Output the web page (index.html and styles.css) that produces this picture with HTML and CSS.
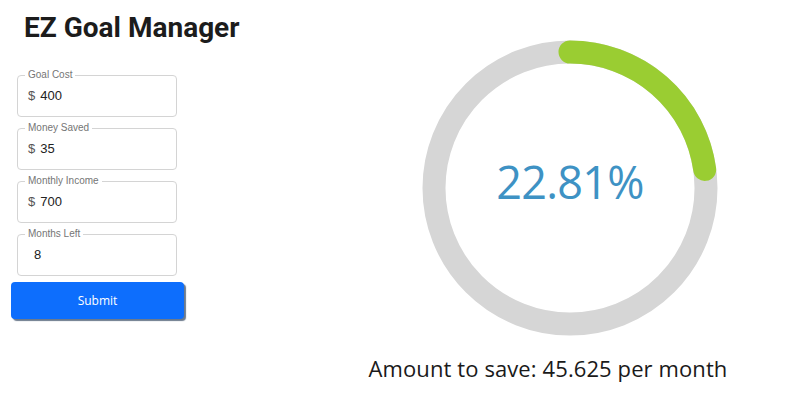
FILE: index.html
```html
<!DOCTYPE html>
<html>
<head>
<meta charset="utf-8">
<title>EZ Goal Manager</title>
<link rel="stylesheet" href="styles.css">
</head>
<body>
<div class="page">
  <div class="left">
    <h1 class="title">EZ Goal Manager</h1>
    <form class="form">
      <fieldset class="field">
        <legend class="field-label">Goal Cost</legend>
        <div class="field-row"><span class="prefix">$</span><span class="value">400</span></div>
      </fieldset>
      <fieldset class="field">
        <legend class="field-label">Money Saved</legend>
        <div class="field-row"><span class="prefix">$</span><span class="value">35</span></div>
      </fieldset>
      <fieldset class="field">
        <legend class="field-label">Monthly Income</legend>
        <div class="field-row"><span class="prefix">$</span><span class="value">700</span></div>
      </fieldset>
      <fieldset class="field">
        <legend class="field-label">Months Left</legend>
        <div class="field-row"><span class="value plain">8</span></div>
      </fieldset>
      <button type="button" class="submit">Submit</button>
    </form>
  </div>
  <div class="right">
    <svg class="ring" width="300" height="300" viewBox="0 0 300 300">
      <circle cx="150" cy="150" r="136" fill="none" stroke="#d6d6d6" stroke-width="23"/>
      <circle cx="150" cy="150" r="136" fill="none" stroke="#9acd32" stroke-width="23" stroke-linecap="round" stroke-dasharray="194.9 854.5" transform="rotate(-90 150 150)"/>
      <text class="pct" x="150" y="160.5">22.81%</text>
    </svg>
    <p class="result">Amount to save: 45.625 per month</p>
  </div>
</div>
</body>
</html>
```

FILE: styles.css
```css
html, body {
  margin: 0;
  padding: 0;
  background: #ffffff;
}

.page {
  display: flex;
  width: 806px;
  height: 417px;
}

.left {
  width: 290px;
  padding-left: 11px;
  box-sizing: border-box;
}

.title {
  margin: 10px 0 0 13px;
  font-family: Roboto, "Liberation Sans", sans-serif;
  font-weight: 700;
  font-size: 28px;
  line-height: 36px;
  color: #1c1c1c;
}

.form {
  display: flex;
  flex-direction: column;
  margin-top: 24px;
  gap: 6px;
}

.field {
  margin: 0 0 0 6px;
  width: 160px;
  box-sizing: border-box;
  border: 1px solid #d4d4d4;
  border-radius: 4px;
  padding: 0 7px 5px 7px;
  min-width: 0;
}

.field-label {
  font-family: "Liberation Sans", Arial, sans-serif;
  font-size: 10px;
  line-height: 10px;
  color: #757575;
  padding: 0 3px;
}

.field-row {
  display: flex;
  align-items: center;
  height: 31px;
  padding-left: 3px;
  font-family: "Liberation Sans", Arial, sans-serif;
  font-size: 13px;
  color: #222222;
}

.prefix {
  color: #555555;
  margin-right: 5px;
}

.value.plain {
  margin-left: 6px;
}

.submit {
  width: 173px;
  height: 37px;
  border: none;
  border-radius: 4px;
  background: #0d6efd;
  color: #ffffff;
  font-family: "Open Sans", "Noto Sans", sans-serif;
  font-size: 12px;
  box-shadow: 2px 2px 1px #6c7a8c;
  padding: 0;
}

.right {
  flex: 1;
  display: flex;
  flex-direction: column;
  align-items: center;
  padding-top: 38px;
}

.ring {
  display: block;
  margin-left: 44px;
}

.pct {
  font-family: "Open Sans", "Noto Sans", sans-serif;
  font-size: 45px;
  letter-spacing: -0.7px;
  fill: #3e92c4;
  text-anchor: middle;
}

.result {
  margin: 15px 0 0 0;
  font-family: "Open Sans", "Noto Sans", sans-serif;
  font-size: 22px;
  line-height: 30px;
  letter-spacing: 0.1px;
  color: #1a1a1a;
}
```
